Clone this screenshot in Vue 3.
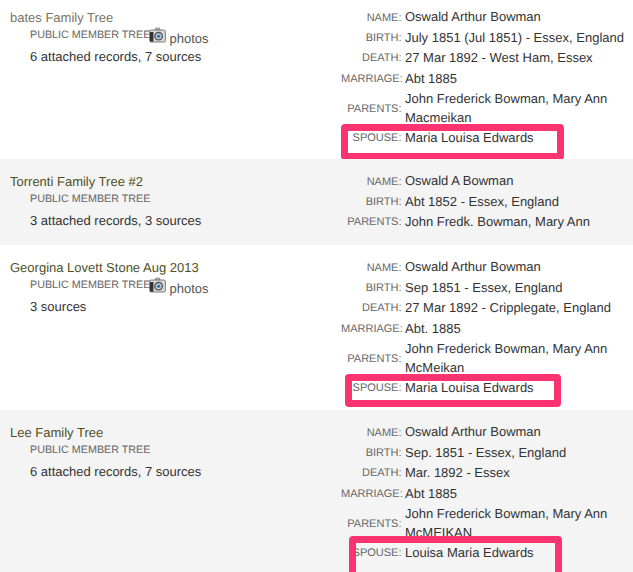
<template>
  <div class="results">
    <div v-for="tree in trees" :key="tree.name" class="record" :class="{ alt: tree.alt, first: tree.first }" :style="{ height: tree.height + 'px' }">
      <div class="tree">
        <div class="tree-name" :class="{ faded: tree.first }">{{ tree.name }}</div>
        <div class="tree-info">
          <div class="tree-type">
            <span>PUBLIC MEMBER TREE</span>
            <span v-if="tree.photos" class="photos">
              <svg class="camera" width="17" height="16" viewBox="0 0 17 16">
                <path d="M6 3 L6.8 1 H10.4 L11.2 3 Z" fill="#c9c9c9" stroke="#777" stroke-width=".7" />
                <rect x=".6" y="3" width="15.8" height="12" rx="1.5" fill="#d8d8d8" stroke="#666" stroke-width=".8" />
                <rect x="1" y="5" width="3.4" height="9.6" fill="#333" />
                <circle cx="9.6" cy="9.2" r="4.4" fill="#555" />
                <circle cx="9.6" cy="9.2" r="3" fill="#cfd6dc" />
                <circle cx="9.6" cy="9.2" r="1.8" fill="#3b78b0" />
              </svg>
              photos
            </span>
          </div>
          <div class="tree-records">{{ tree.records }}</div>
        </div>
      </div>
      <dl class="facts">
        <template v-for="fact in tree.facts" :key="fact[0]">
          <dt>{{ fact[0] }}:</dt>
          <dd>{{ fact[1] }}</dd>
        </template>
      </dl>
      <div v-if="tree.box" class="highlight" :style="tree.box"></div>
    </div>
  </div>
</template>

<script setup>
const trees = [
  {
    name: 'bates Family Tree',
    first: true,
    photos: true,
    records: '6 attached records, 7 sources',
    height: 159,
    facts: [
      ['Name', 'Oswald Arthur Bowman'],
      ['Birth', 'July 1851 (Jul 1851) - Essex, England'],
      ['Death', '27 Mar 1892 - West Ham, Essex'],
      ['Marriage', 'Abt 1885'],
      ['Parents', 'John Frederick Bowman, Mary Ann Macmeikan'],
      ['Spouse', 'Maria Louisa Edwards'],
    ],
    box: { left: '341px', top: '124px', width: '223px', height: '36px' },
  },
  {
    name: 'Torrenti Family Tree #2',
    alt: true,
    records: '3 attached records, 3 sources',
    height: 86,
    facts: [
      ['Name', 'Oswald A Bowman'],
      ['Birth', 'Abt 1852 - Essex, England'],
      ['Parents', 'John Fredk. Bowman, Mary Ann'],
    ],
  },
  {
    name: 'Georgina Lovett Stone Aug 2013',
    photos: true,
    records: '3 sources',
    height: 165,
    facts: [
      ['Name', 'Oswald Arthur Bowman'],
      ['Birth', 'Sep 1851 - Essex, England'],
      ['Death', '27 Mar 1892 - Cripplegate, England'],
      ['Marriage', 'Abt. 1885'],
      ['Parents', 'John Frederick Bowman, Mary Ann McMeikan'],
      ['Spouse', 'Maria Louisa Edwards'],
    ],
    box: { left: '345px', top: '129px', width: '216px', height: '33px' },
  },
  {
    name: 'Lee Family Tree',
    alt: true,
    records: '6 attached records, 7 sources',
    height: 162,
    facts: [
      ['Name', 'Oswald Arthur Bowman'],
      ['Birth', 'Sep. 1851 - Essex, England'],
      ['Death', 'Mar. 1892 - Essex'],
      ['Marriage', 'Abt 1885'],
      ['Parents', 'John Frederick Bowman, Mary Ann McMEIKAN'],
      ['Spouse', 'Louisa Maria Edwards'],
    ],
    box: { left: '349px', top: '126px', width: '213px', height: '50px' },
  },
]
</script>

<style>
html,
body {
  margin: 0;
  background: #fff;
  overflow: hidden;
}
</style>

<style scoped>
.results {
  width: 633px;
  height: 572px;
  overflow: hidden;
  font-family: 'Liberation Sans', Arial, sans-serif;
  font-size: 13px;
  color: #333;
  text-rendering: geometricPrecision;
}

.record {
  position: relative;
  display: flex;
  box-sizing: border-box;
  padding-top: 12px;
}

.first {
  padding-top: 7px;
}

.alt {
  background: #f4f4f4;
}

.tree {
  width: 341px;
  flex: none;
  padding: 2px 0 0 10px;
  box-sizing: border-box;
}

.tree-name {
  font-size: 13px;
  line-height: 17px;
  color: #50501f;
}

.faded {
  color: #7b7361;
}

.tree-info {
  padding-left: 20px;
}

.tree-type {
  display: flex;
  font-size: 10.75px;
  line-height: 18px;
  color: #666;
}

.photos {
  display: flex;
  align-items: flex-start;
  gap: 3px;
  font-size: 13px;
  color: #555;
  line-height: 26px;
  height: 18px;
}

.camera {
  margin-top: 1px;
  margin-left: -1px;
}

.tree-records {
  margin-top: 4px;
  line-height: 18px;
}

.facts {
  margin: 0;
  flex: 1;
  display: grid;
  grid-template-columns: 60.5px 1fr;
  column-gap: 3.5px;
  align-items: center;
  grid-auto-rows: minmax(20.4px, auto);
  align-content: start;
}

dt {
  padding-top: 1px;
  text-align: right;
  text-transform: uppercase;
  font-size: 11px;
  color: #666;
}

dd {
  margin: 0;
  line-height: 19.5px;
  color: #333;
}

.highlight {
  position: absolute;
  box-sizing: border-box;
  border: 7px solid #fb3370;
  border-radius: 4px;
}
</style>
